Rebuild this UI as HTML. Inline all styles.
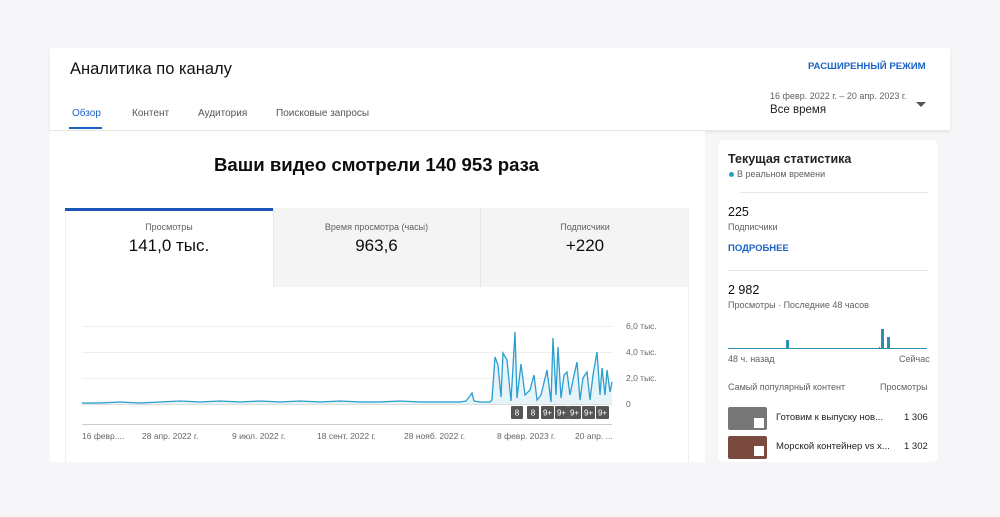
<!DOCTYPE html>
<html><head><meta charset="utf-8"><style>
*{margin:0;padding:0;box-sizing:border-box}
body{width:1000px;height:517px;background:#f6f6f8;font-family:"Liberation Sans",sans-serif;position:relative;overflow:hidden;color:#0d0d0d}
.a{position:absolute;white-space:nowrap}
.hdr{left:50px;top:48px;width:900px;height:82px;background:#fff;box-shadow:0 2px 3px rgba(0,0,0,.08)}
.main{left:50px;top:131px;width:655px;height:331px;background:#fff}
.side{left:718px;top:140px;width:220px;height:322px;background:#fff;border-radius:6px}
.tab{font-size:10px;color:#555;top:108px}
.g{color:#606060}
.ln{height:1px;background:#e6e6e6}
</style></head><body>
<div class="a hdr"></div>
<div class="a main"></div>
<div class="a side"></div>
<div class="a" style="left:70px;top:60px;font-size:16.5px;color:#111">Аналитика по каналу</div>
<div class="a" style="left:808px;top:61px;font-size:9.6px;font-weight:bold;color:#1a63c4">РАСШИРЕННЫЙ РЕЖИМ</div>
<div class="a tab" style="left:72px;color:#1a63c4">Обзор</div>
<div class="a" style="left:69px;top:127px;width:33px;height:2px;background:#1a63c4"></div>
<div class="a tab" style="left:132px">Контент</div>
<div class="a tab" style="left:198px">Аудитория</div>
<div class="a tab" style="left:276px">Поисковые запросы</div>
<div class="a g" style="left:770px;top:91px;font-size:9px">16 февр. 2022 г. – 20 апр. 2023 г.</div>
<div class="a" style="left:770px;top:104px;font-size:11.5px;color:#222">Все время</div>
<div class="a" style="left:916px;top:102px;width:0;height:0;border-left:5px solid transparent;border-right:5px solid transparent;border-top:5px solid #555"></div>
<div class="a" style="left:214px;top:154px;font-size:18.6px;font-weight:bold">Ваши видео смотрели 140 953 раза</div>
<div class="a" style="left:65px;top:208px;width:624px;height:254px;border:1px solid #eee;border-bottom:none"></div>
<div class="a" style="left:273px;top:208px;width:416px;height:79px;background:#f4f4f4;border-left:1px solid #e8e8e8"></div>
<div class="a" style="left:480px;top:208px;width:1px;height:79px;background:#e4e4e4"></div>
<div class="a" style="left:65px;top:208px;width:208px;height:3px;background:#1a55b8"></div>
<div class="a g" style="left:65px;width:208px;text-align:center;top:222px;font-size:9px">Просмотры</div>
<div class="a" style="left:65px;width:208px;text-align:center;top:236px;font-size:17px">141,0 тыс.</div>
<div class="a g" style="left:273px;width:207px;text-align:center;top:222px;font-size:9px">Время просмотра (часы)</div>
<div class="a" style="left:273px;width:207px;text-align:center;top:236px;font-size:17px">963,6</div>
<div class="a g" style="left:481px;width:208px;text-align:center;top:222px;font-size:9px">Подписчики</div>
<div class="a" style="left:481px;width:208px;text-align:center;top:236px;font-size:17px">+220</div>
<svg class="a" style="left:0;top:0" width="1000" height="517">
<g stroke="#eee" stroke-width="1"><line x1="82" y1="326.5" x2="612" y2="326.5"/><line x1="82" y1="352.5" x2="612" y2="352.5"/><line x1="82" y1="378.5" x2="612" y2="378.5"/></g>
<line x1="82" y1="404.5" x2="612" y2="404.5" stroke="#ddd"/>
<line x1="82" y1="424.5" x2="612" y2="424.5" stroke="#ccc"/>
<polygon fill="#e6f3f8" points="82,404 82,402 150,402 300,401 468,401 472,395 475,402 490,402 495,357 498,365 501,397 503,353 507,360 511,401 515,332 517,398 521,364 525,395 530,390 534,375 537,400 541,395 547,370 551,402 553,338 556,395 558,347 561,398 564,375 567,372 570,395 573,380 577,362 580,400 583,378 587,372 590,400 593,375 597,352 600,395 602,368 605,395 607,370 610,392 612,382 612,404"/>
<polyline fill="none" stroke="#2a9fd0" stroke-width="1.3" points="82,403 100,403 120,402 140,403 160,402 180,401 200,402 220,401 240,402 260,401 280,402 300,401 320,402 340,401 360,402 380,402 400,401 420,402 440,402 460,402 466,401 470,396 472,393 474,401 480,402 490,402 492,400 495,357 498,365 501,397 503,353 507,360 511,401 515,332 517,398 521,364 525,395 530,390 534,375 537,400 541,395 547,370 551,402 553,338 556,395 558,347 561,398 564,375 567,372 570,395 573,380 577,362 580,400 583,378 587,372 590,400 593,375 597,352 600,395 602,368 605,395 607,370 610,392 612,382"/>
<g fill="#555"><rect x="511" y="406" width="12" height="13" rx="1"/><rect x="527" y="406" width="12" height="13" rx="1"/><rect x="541" y="406" width="13" height="13" rx="1"/><rect x="555" y="406" width="13" height="13" rx="1"/><rect x="568" y="406" width="13" height="13" rx="1"/><rect x="582" y="406" width="13" height="13" rx="1"/><rect x="596" y="406" width="13" height="13" rx="1"/></g>
<g fill="#fff" font-family="Liberation Sans" font-size="8" text-anchor="middle"><text x="517" y="415.5">8</text><text x="533" y="415.5">8</text><text x="547.5" y="415.5">9+</text><text x="561.5" y="415.5">9+</text><text x="574.5" y="415.5">9+</text><text x="588.5" y="415.5">9+</text><text x="602.5" y="415.5">9+</text></g>
<g fill="#666" font-family="Liberation Sans" font-size="8.5"><text x="626" y="329">6,0 тыс.</text><text x="626" y="355">4,0 тыс.</text><text x="626" y="381">2,0 тыс.</text><text x="626" y="407">0</text>
<text x="82" y="439">16 февр....</text><text x="142" y="439">28 апр. 2022 г.</text><text x="232" y="439">9 июл. 2022 г.</text><text x="317" y="439">18 сент. 2022 г.</text><text x="404" y="439">28 нояб. 2022 г.</text><text x="497" y="439">8 февр. 2023 г.</text><text x="575" y="439">20 апр. ...</text></g>
<g fill="#2a8fb0"><rect x="786" y="340" width="3" height="8"/><rect x="881" y="329" width="3" height="19"/><rect x="887" y="337" width="3" height="11"/><rect x="879" y="347" width="1" height="1"/></g>
<line x1="728" y1="348.5" x2="927" y2="348.5" stroke="#2a8fb0" stroke-width="1"/>
</svg>
<div class="a" style="left:728px;top:152px;font-size:12.5px;font-weight:bold;color:#222">Текущая статистика</div>
<div class="a" style="left:729px;top:172px;width:5px;height:5px;border-radius:50%;background:#2a9fc0"></div>
<div class="a g" style="left:737px;top:169px;font-size:9px">В реальном времени</div>
<div class="a ln" style="left:740px;top:192px;width:188px"></div>
<div class="a" style="left:728px;top:205px;font-size:12.5px">225</div>
<div class="a g" style="left:728px;top:222px;font-size:9px">Подписчики</div>
<div class="a" style="left:728px;top:243px;font-size:9.5px;font-weight:bold;color:#1a63c4">ПОДРОБНЕЕ</div>
<div class="a ln" style="left:728px;top:270px;width:200px"></div>
<div class="a" style="left:728px;top:283px;font-size:12.5px">2 982</div>
<div class="a g" style="left:728px;top:300px;font-size:9px">Просмотры · Последние 48 часов</div>
<div class="a g" style="left:728px;top:354px;font-size:9px">48 ч. назад</div>
<div class="a g" style="left:899px;top:354px;font-size:9px">Сейчас</div>
<div class="a g" style="left:728px;top:382px;font-size:9px">Самый популярный контент</div>
<div class="a g" style="left:880px;top:382px;font-size:9px">Просмотры</div>
<div class="a" style="left:728px;top:407px;width:39px;height:23px;background:#777;border-radius:2px"></div>
<div class="a" style="left:754px;top:418px;width:10px;height:10px;background:#fff"></div>
<div class="a" style="left:728px;top:436px;width:39px;height:23px;background:#7a4a3e;border-radius:2px"></div>
<div class="a" style="left:754px;top:446px;width:10px;height:10px;background:#fff"></div>
<div class="a" style="left:776px;top:412px;font-size:9.5px;color:#222">Готовим к выпуску нов...</div>
<div class="a" style="left:904px;top:412px;font-size:9.5px;color:#222">1 306</div>
<div class="a" style="left:776px;top:441px;font-size:9.5px;color:#222">Морской контейнер vs х...</div>
<div class="a" style="left:904px;top:441px;font-size:9.5px;color:#222">1 302</div>
</body></html>
